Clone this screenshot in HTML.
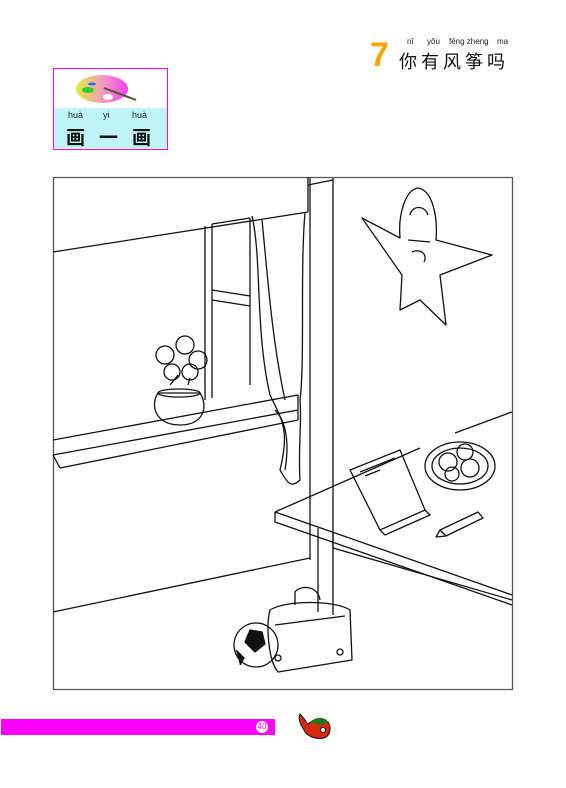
<!DOCTYPE html>
<html><head><meta charset="utf-8"><style>
body{margin:0;width:566px;height:788px;background:#fff;position:relative;overflow:hidden;font-family:"Liberation Sans","Noto Sans CJK SC",sans-serif}
.abs{position:absolute}
</style></head><body>
<div class="abs" style="left:370px;top:38px;font-size:34px;font-weight:bold;color:#f7a800;font-family:'Liberation Sans',sans-serif;line-height:34px">7</div>
<div class="abs" style="left:403px;top:37px;font-size:8px;color:#222">
<span class="abs" style="left:4px">nǐ</span><span class="abs" style="left:24px">yǒu</span><span class="abs" style="left:46px;white-space:nowrap">fēng zheng</span><span class="abs" style="left:94px">ma</span></div>
<div class="abs" style="left:399px;top:48px;font-size:18px;color:#111;letter-spacing:4px;white-space:nowrap">你有风筝吗</div>

<div class="abs" style="left:53px;top:68px;width:113px;height:80px;border:1px solid #f0f;background:#fff"></div>
<div class="abs" style="left:54px;top:108px;width:113px;height:40px;background:#bff5f8"></div>
<svg class="abs" style="left:70px;top:72px" width="80" height="36"><defs><linearGradient id="g" x1="0" x2="1"><stop offset="0" stop-color="#dff040"/><stop offset="0.6" stop-color="#f58bd0"/><stop offset="1" stop-color="#f040f0"/></linearGradient></defs>
<ellipse cx="32" cy="17" rx="26" ry="14" fill="url(#g)"/><ellipse cx="38" cy="25" rx="5" ry="3" fill="#fff"/><ellipse cx="18" cy="18" rx="6" ry="3" fill="#3c3"/><ellipse cx="22" cy="12" rx="4" ry="1.5" fill="#36f"/><line x1="34" y1="16" x2="66" y2="28" stroke="#553" stroke-width="2"/></svg>
<div class="abs" style="left:68px;top:110px;font-size:9px;color:#222">huà</div>
<div class="abs" style="left:103px;top:110px;font-size:9px;color:#222">yi</div>
<div class="abs" style="left:132px;top:110px;font-size:9px;color:#222">huà</div>
<div class="abs" style="left:66px;top:123px;font-size:19px;font-weight:bold;color:#111;white-space:nowrap;letter-spacing:14px">画一画</div>

<svg class="abs" style="left:0;top:0" width="566" height="788" fill="none" stroke="#111" stroke-width="1.3" stroke-linejoin="round">
<rect x="53.5" y="177.5" width="459" height="512" stroke="#555"/>
<path d="M53 252 L308 212 M308 177 L308 212"/>
<line x1="308" y1="185" x2="333" y2="180"/>
<path d="M310 178 V560 M333 178 V548"/>
<path d="M205 226 V400 M212 224 V398 M250 218 V385 M212 290 L250 296 M212 300 L250 306 M212 224 L250 218"/>
<path d="M252 216 C262 260 255 330 270 395 C282 420 290 430 280 470 C286 480 290 490 300 480 C298 450 302 420 300 400 C305 360 300 270 305 213"/>
<path d="M262 220 C268 280 272 340 285 400 M275 410 C285 420 290 440 285 470"/>
<path d="M53 440 L298 395 M53 455 L298 410 M60 468 L298 420 M53 455 L60 468 M298 395 V420"/>
<path d="M158 393 C150 405 155 425 180 425 C205 425 208 405 200 393 Z"/>
<ellipse cx="179" cy="393" rx="21" ry="4"/>
<circle cx="165" cy="355" r="9"/><circle cx="185" cy="345" r="9"/><circle cx="198" cy="360" r="9"/><circle cx="172" cy="372" r="8"/><circle cx="190" cy="372" r="8"/>
<path d="M170 385 L178 375 M188 385 L190 378"/>
<path d="M53 612 L310 558 M333 548 L512 600"/>
<path d="M275 512 L420 448 M455 433 L512 412 M275 512 L512 595 M275 512 V522 L512 605"/>
<path d="M318 528 V612 M333 533 V615"/>
<path d="M350 470 L400 450 L425 510 L380 530 Z M380 530 L385 535 L430 515 L425 510"/>
<path d="M360 472 L395 458 M365 476 L380 470"/>
<ellipse cx="460" cy="466" rx="35" ry="24"/><ellipse cx="460" cy="466" rx="28" ry="18"/>
<circle cx="448" cy="462" r="9"/><circle cx="465" cy="452" r="8"/><circle cx="470" cy="468" r="9"/><circle cx="452" cy="474" r="7"/>
<path d="M440 530 L478 512 L483 518 L446 536 Z M440 530 L436 537 L446 536"/>
<path d="M362 218 L400 238 C398 215 405 190 418 188 C432 190 438 215 436 240 L492 255 L440 275 L446 325 L420 300 L400 310 L402 275 Z"/>
<path d="M410 215 C412 205 425 205 428 215 M408 240 L430 242 M412 252 C420 248 428 254 424 262"/>
<circle cx="256" cy="645" r="22"/><path d="M250 630 L262 632 L265 644 L255 652 L245 642 Z" fill="#111"/><path d="M236 650 L244 658 L240 665" fill="#111"/>
<path d="M270 610 C285 600 335 600 350 610 L352 660 L278 672 C268 660 266 625 270 610 Z"/>
<path d="M275 625 L345 616 M295 605 V592 C300 585 318 585 320 600"/>
<circle cx="278" cy="658" r="3"/><circle cx="340" cy="652" r="3"/>
</svg>

<div class="abs" style="left:1px;top:719px;width:274px;height:16px;background:#f0f"></div>
<div class="abs" style="left:256px;top:721px;width:12px;height:12px;border-radius:50%;background:#fff;color:#f0f;font-size:8px;text-align:center;line-height:12px">40</div>
<svg class="abs" style="left:296px;top:712px" width="40" height="30"><path d="M4 2 C8 6 10 10 12 12 C16 8 26 6 32 10 C36 16 34 24 28 26 C20 28 10 24 8 18 C4 12 2 6 4 2Z" fill="#d62a10" stroke="#111"/><path d="M14 10 C20 4 30 5 32 10 L24 13 Z" fill="#1a7a1a"/><circle cx="27" cy="18" r="2.5" fill="#fff" stroke="#111"/></svg>
</body></html>
